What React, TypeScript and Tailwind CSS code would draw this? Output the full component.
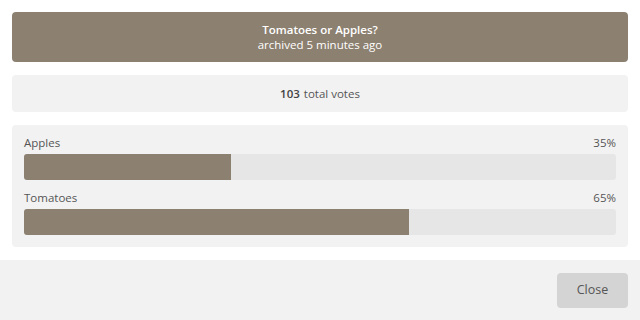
const options = [
  { label: "Apples", pct: 35 },
  { label: "Tomatoes", pct: 65 },
];

export default function App() {
  return (
    <div className="flex h-[320px] w-[640px] flex-col bg-white font-['Open_Sans',sans-serif] text-[#555]">
      <div className="flex flex-col gap-[13px] px-3 pt-3">
        {/* Poll header */}
        <div className="flex h-[50px] flex-col items-center justify-center rounded bg-[#8c8070] text-white">
          <div className="text-[11.5px] font-semibold leading-[15px]">Tomatoes or Apples?</div>
          <div className="text-[11.5px] leading-[15px]">archived 5 minutes ago</div>
        </div>

        {/* Totals */}
        <div className="flex h-[37px] items-center justify-center rounded bg-[#f2f2f2] text-[11.5px]">
          <span className="mr-1 font-semibold text-[#444]">103</span> total votes
        </div>

        {/* Results */}
        <div className="flex flex-col gap-[10px] rounded bg-[#f2f2f2] px-3 pb-3 pt-[10px]">
          {options.map((o) => (
            <div key={o.label}>
              <div className="mb-[3px] flex justify-between text-[11.5px] leading-[16px]">
                <span>{o.label}</span>
                <span>{o.pct}%</span>
              </div>
              <div className="h-[26px] overflow-hidden rounded-[3px] bg-[#e6e6e6]">
                <div className="h-full bg-[#8c8070]" style={{ width: `${o.pct}%` }} />
              </div>
            </div>
          ))}
        </div>
      </div>

      {/* Footer */}
      <div className="mt-[13px] flex flex-1 items-center justify-end bg-[#f2f2f2] px-3">
        <button className="h-[35px] w-[71px] rounded bg-[#d4d4d4] text-[12.5px] text-[#555]">
          Close
        </button>
      </div>
    </div>
  );
}
